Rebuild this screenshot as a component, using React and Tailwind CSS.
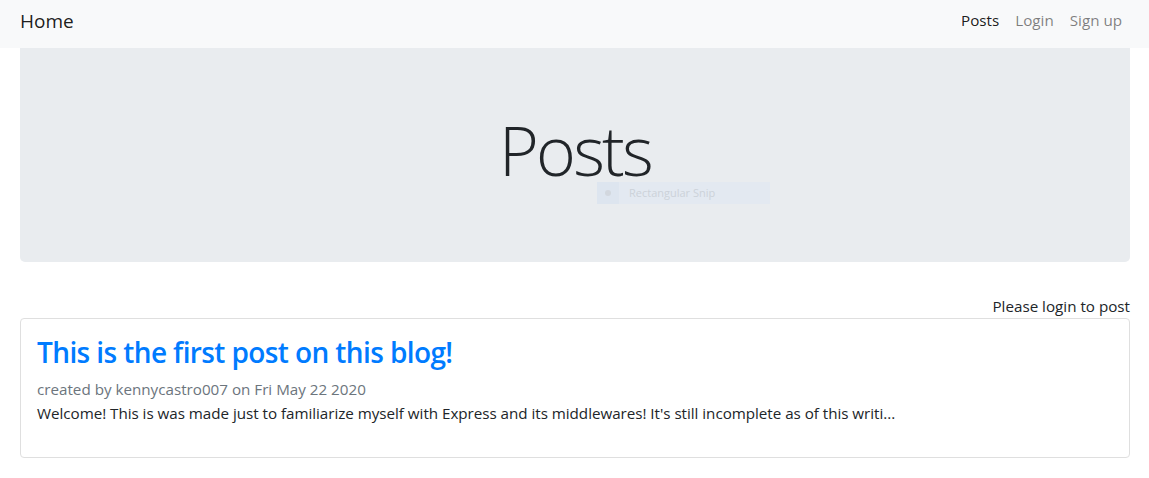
export default function App() {
  return (
    <div className="min-h-[478px] bg-white text-[#212529] font-['Open_Sans',sans-serif]">
      <nav className="h-12 bg-[#f8f9fa] flex items-start justify-between pl-5 pr-[19px]">
        <span className="mt-[6px] text-[19px] leading-[30px] text-[rgba(0,0,0,0.9)]">Home</span>
        <div className="mt-[8px] flex items-center text-[15.2px] leading-6">
          <span className="px-2 text-[rgba(0,0,0,0.9)]">Posts</span>
          <span className="px-2 text-[rgba(0,0,0,0.5)]">Login</span>
          <span className="px-2 text-[rgba(0,0,0,0.5)]">Sign up</span>
        </div>
      </nav>
      <div className="pl-5 pr-[19px]">
        <div className="relative h-[214px] bg-[#e9ecef] rounded-b-[5px] flex items-start justify-center">
          <h1 className="mt-[61px] text-[68px] leading-[82px] font-light tracking-[-2.8px]">Posts</h1>
          <div className="absolute left-[577px] top-[134px] w-[173px] h-[22px] flex bg-[#e3e9f1]">
            <div className="w-[22px] h-[22px] bg-[#dde5ef] flex items-center justify-center">
              <div className="w-[6px] h-[6px] rounded-full bg-[#d2d7de]"></div>
            </div>
            <span className="pl-[10px] text-[11px] leading-[22px] text-[#ccd2d9]">Rectangular Snip</span>
          </div>
        </div>
        <div className="mt-8 text-right text-[15.2px] leading-6">Please login to post</div>
        <div className="border border-[#dfdfdf] rounded-[4px] pl-4 pr-4 pt-[16px] pb-[32px]">
          <h2 className="text-[28px] leading-[34px] font-semibold tracking-[-0.6px] text-[#007bff]">This is the first post on this blog!</h2>
          <div className="mt-[8px] text-[15.2px] leading-6 text-[#6c757d]">created by kennycastro007 on Fri May 22 2020</div>
          <p className="text-[15.2px] leading-6 tracking-[-0.03px]">Welcome! This is was made just to familiarize myself with Express and its middlewares! It's still incomplete as of this writi...</p>
        </div>
      </div>
    </div>
  );
}
